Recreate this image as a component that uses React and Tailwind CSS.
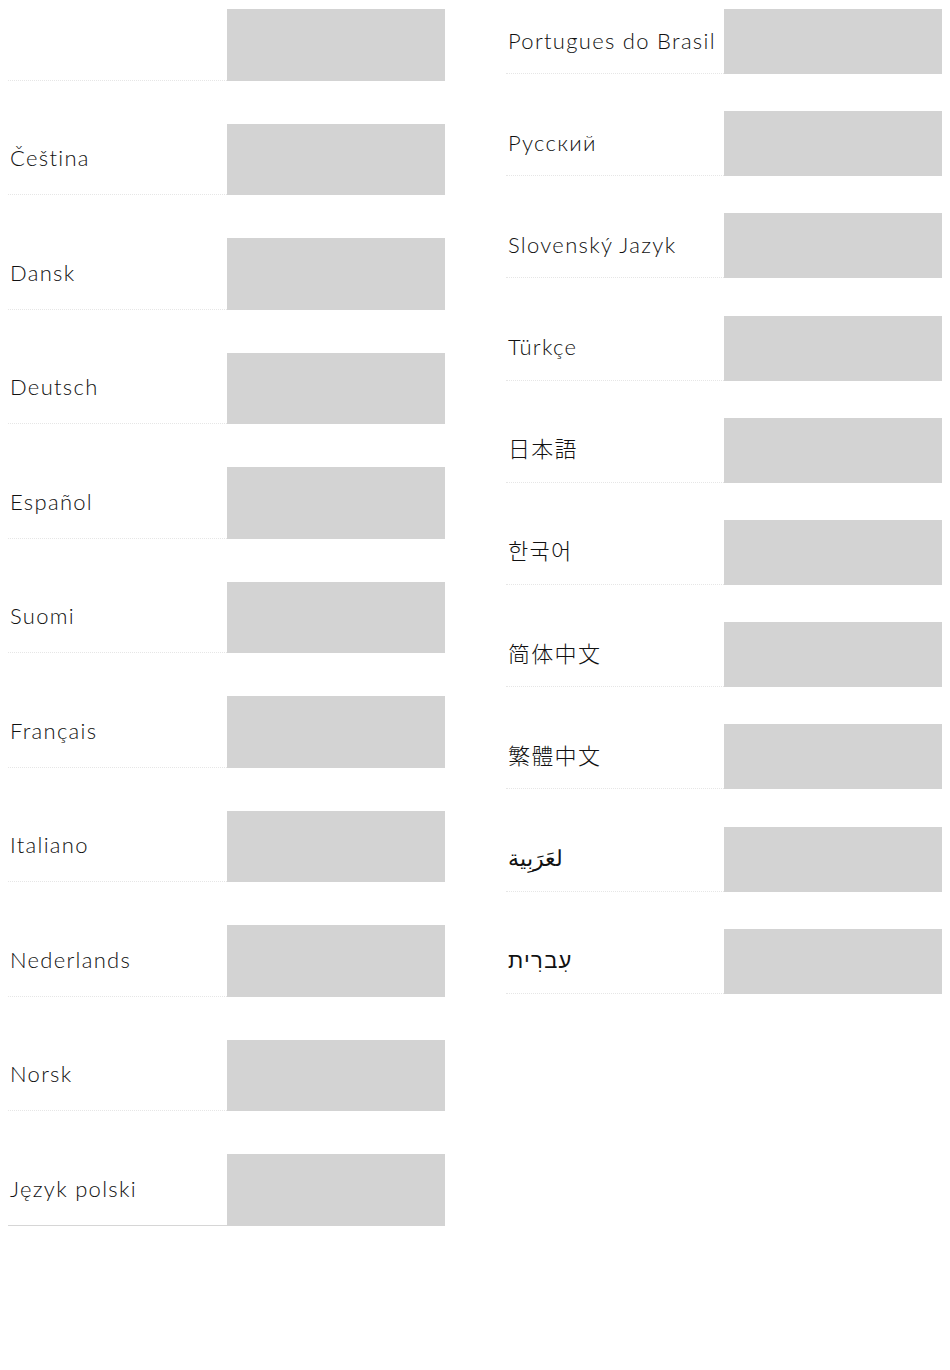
import React from "react";

const left = ["", "Čeština", "Dansk", "Deutsch", "Español", "Suomi", "Français", "Italiano", "Nederlands", "Norsk", "Język polski"];
const right = ["Portugues do Brasil", "Русский", "Slovenský Jazyk", "Türkçe", "日本語", "한국어", "简体中文", "繁體中文", "لعَرَبِية", "עִברִית"];

const font = { fontFamily: 'Lato, "Noto Sans CJK JP", "Noto Sans CJK SC", "Noto Sans CJK TC", "Noto Sans CJK KR", "DejaVu Sans", sans-serif' };

function Row({ label, tall, last }) {
  return (
    <div className={tall ? "flex h-[71.5px] mb-[43px]" : "flex h-[65px] mb-[37.2px]"}>
      <div
        className={
          "w-1/2 flex items-center pl-[2px] pb-[2px] text-[22px] font-light text-[#111111] whitespace-nowrap tracking-[1.3px] border-b " +
          (last ? "border-solid border-[#d6d6d6]" : "border-dotted border-[#e6e6e6]")
        }
      >
        {label}
      </div>
      <div className="w-1/2 bg-[#d3d3d3]"></div>
    </div>
  );
}

export default function App() {
  return (
    <div className="w-[950px] min-h-[1370px] bg-white px-[8px] pt-[9px] flex justify-between" style={font}>
      <div className="w-[437px] flex flex-col">
        {left.map((l, i) => (
          <Row key={i} label={l} tall last={i === left.length - 1} />
        ))}
      </div>
      <div className="w-[436px] flex flex-col">
        {right.map((l, i) => (
          <Row key={i} label={l} />
        ))}
      </div>
    </div>
  );
}
